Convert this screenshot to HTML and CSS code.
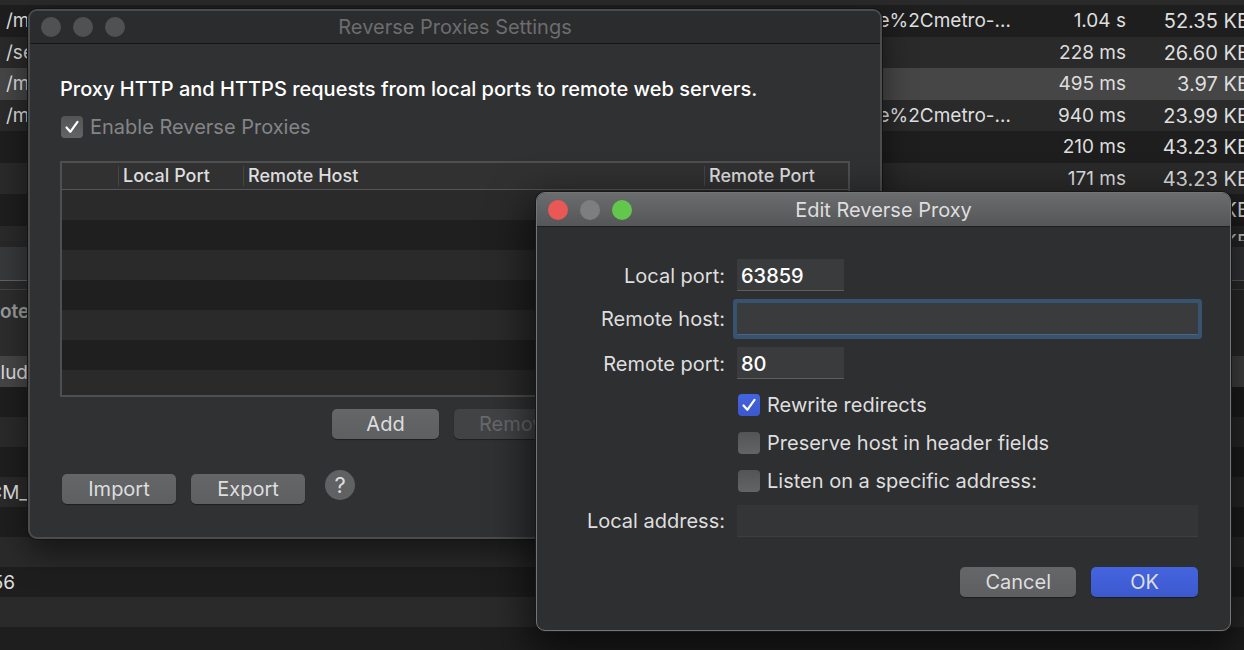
FILE: index.html
```
<!DOCTYPE html>
<html lang="en">
<head>
<meta charset="utf-8">
<title>Edit Reverse Proxy</title>
<link rel="stylesheet" href="styles.css">
</head>
<body>
<main class="backdrop">
  <div class="requests">
    <table class="request-table">
      <colgroup><col class="col-path"><col><col class="col-time"><col class="col-size"></colgroup>
      <tbody>
        <tr><td>/m</td><td class="url">e%2Cmetro-…</td><td class="num">1.04 s</td><td class="num size">52.35 KB</td></tr>
        <tr><td>/se</td><td></td><td class="num">228 ms</td><td class="num size">26.60 KB</td></tr>
        <tr class="selected"><td>/m</td><td></td><td class="num">495 ms</td><td class="num size">3.97 KB</td></tr>
        <tr><td>/m</td><td class="url">e%2Cmetro-…</td><td class="num">940 ms</td><td class="num size">23.99 KB</td></tr>
        <tr><td></td><td></td><td class="num">210 ms</td><td class="num size">43.23 KB</td></tr>
        <tr><td></td><td></td><td class="num">171 ms</td><td class="num size">43.23 KB</td></tr>
        <tr><td></td><td></td><td></td><td class="num size">KB</td></tr>
        <tr><td></td><td></td><td></td><td class="num size">KB</td></tr>
      </tbody>
    </table>
  </div>
  <div class="toolbar"></div>
  <div class="divider"></div>
  <div class="tabs"><span class="tab">ote</span></div>
  <div class="details">
    <div class="detail selected"><span class="tail">clud</span></div>
    <div class="detail"></div>
    <div class="detail"></div>
    <div class="detail"></div>
    <div class="detail"><span class="tail">CM_</span></div>
    <div class="detail"></div>
    <div class="detail"></div>
    <div class="detail"><span class="tail short">56</span></div>
    <div class="detail"></div>
    <div class="detail"></div>
  </div>
</main>

<section class="window settings">
  <header class="titlebar">
    <div class="lights">
      <button class="light" aria-label="Close"></button>
      <button class="light" aria-label="Minimize"></button>
      <button class="light" aria-label="Zoom"></button>
    </div>
    <h1 class="title">Reverse Proxies Settings</h1>
  </header>
  <div class="settings-body">
    <p class="intro">Proxy HTTP and HTTPS requests from local ports to remote web servers.</p>
    <label class="option muted">
      <span class="check"><input type="checkbox" checked>
        <svg viewBox="0 0 22 22"><path d="M5.5 11.5 9.3 15.8 16.5 5.8"/></svg></span>
      Enable Reverse Proxies
    </label>
    <div class="proxy-list">
      <table class="proxy-table">
        <colgroup><col class="col-on"><col class="col-local"><col><col class="col-remote"></colgroup>
        <thead><tr><th></th><th>Local Port</th><th>Remote Host</th><th>Remote Port</th></tr></thead>
      </table>
      <div class="proxy-rows"></div>
    </div>
    <div class="list-actions">
      <button class="btn">Add</button>
      <button class="btn" disabled>Remove</button>
    </div>
    <div class="file-actions">
      <button class="btn">Import</button>
      <button class="btn">Export</button>
      <button class="help" aria-label="Help">?</button>
    </div>
  </div>
</section>

<section class="window editor">
  <header class="titlebar">
    <div class="lights">
      <button class="light red" aria-label="Close"></button>
      <button class="light" aria-label="Minimize"></button>
      <button class="light green" aria-label="Zoom"></button>
    </div>
    <h2 class="title">Edit Reverse Proxy</h2>
  </header>
  <form class="form">
    <label class="name port-name" for="lport">Local port:</label>
    <input class="field port" id="lport" type="text" value="63859">
    <label class="name" for="rhost">Remote host:</label>
    <input class="field current" id="rhost" type="text">
    <label class="name port-name" for="rport">Remote port:</label>
    <input class="field port" id="rport" type="text" value="80">
    <div class="options">
      <label class="option">
        <span class="check"><input type="checkbox" checked>
          <svg viewBox="0 0 22 22"><path d="M5.5 11.5 9.3 15.8 16.5 5.8"/></svg></span>
        Rewrite redirects
      </label>
      <label class="option"><span class="check"><input type="checkbox"></span>Preserve host in header fields</label>
      <label class="option"><span class="check"><input type="checkbox"></span>Listen on a specific address:</label>
    </div>
    <label class="name" for="laddr">Local address:</label>
    <input class="field" id="laddr" type="text" disabled>
    <div class="form-actions">
      <button class="btn" type="button">Cancel</button>
      <button class="btn primary" type="button">OK</button>
    </div>
  </form>
</section>
</body>
</html>
```
FILE: styles.css
```
* { box-sizing: border-box; }

html, body { height: 100%; }

body {
  margin: 0;
  overflow: hidden;
  position: relative;
  background: #1e1e1e;
  color: #dededf;
  font: 20px/24px Inter, "Liberation Sans", sans-serif;
}

button, input { font: inherit; color: inherit; margin: 0; padding: 0; border: 0; }

/* Main window behind the dialogs */
.backdrop { min-height: 100%; overflow: hidden; font-size: 19px; }

.requests {
  height: 241px;
  padding-top: 5px;
  overflow: hidden;
  background: #2a2a2a;
}
.request-table {
  width: calc(100% + 6px);
  height: 252px;
  table-layout: fixed;
  border-collapse: collapse;
}
.request-table tr:nth-child(odd) { background: #1e1e1e; }
.request-table tr:nth-child(even) { background: #2a2a2a; }
.request-table tr.selected { background: #464646; }
.request-table td { padding: 1px 0 0; white-space: nowrap; }
.request-table td:first-child { padding-left: 6px; }
.request-table .url { padding-right: 13px; text-align: right; }
.request-table .num { text-align: right; }
.request-table .size { font-size: 20px; }
.col-path { width: 200px; }
.col-time { width: 102px; }
.col-size { width: 124px; }

.toolbar { height: 40px; border-top: 6px solid #282828; border-bottom: 1px solid #636363; background: #38393b; }
.divider { height: 9px; border-bottom: 1px solid #454545; background: #2d2d2e; }
.tabs { height: 66px; padding-top: 10px; background: #2d2d2e; }
.tab { color: #9b9b9b; font-weight: 600; }
.details { display: grid; }
.detail { height: 30px; background: #1e1e1e; line-height: 32px; overflow: hidden; }
.detail:nth-child(odd) { background: #2a2a2a; }
.detail.selected { height: 31px; background: #464646; line-height: 34px; }
.tail { display: flex; justify-content: flex-end; width: 28px; }
.tail.short { width: 15px; }

/* Dialog windows */
.window {
  position: absolute;
  border: 2px solid #4b4c4d;
  border-radius: 9px;
  background: #303133;
  box-shadow: 0 0 0 1px #141414, 0 14px 32px rgba(0, 0, 0, .5);
  overflow: hidden;
}
.settings { left: 28px; right: 362px; top: 9px; }
.editor {
  left: 536px;
  right: 13px;
  top: 192px;
  border: 1px solid #747576;
  background: #2e2f31;
  box-shadow: 0 0 0 1px #181818, 0 16px 40px 8px rgba(0, 0, 0, .6);
}

.titlebar {
  display: grid;
  grid-template-columns: 1fr auto 1fr;
  align-items: center;
  height: 33px;
  padding: 0 11px;
  border-bottom: 1px solid #151515;
  background: #2b2c2e;
}
.title { margin: 0; font-size: 20px; font-weight: 400; color: #6c6d6f; }
.editor .titlebar { height: 34px; border-color: #1d1d1e; background: linear-gradient(#6b6c6e, #555658); }
.editor .title { color: #dededf; }
.lights { display: flex; gap: 12px; }
.light { width: 20px; height: 20px; border-radius: 50%; background: #505153; }
.editor .light { background: #7c7e80; }
.editor .light.red { background: #e95855; }
.editor .light.green { background: #63c74d; }

.settings-body { padding: 33px 30px; }
.intro { margin: 0 0 14px; color: #fff; font-weight: 500; white-space: nowrap; }

.option { display: flex; align-items: center; gap: 7px; height: 24px; padding-left: 1px; white-space: nowrap; }
.muted { color: #848587; }

.check { display: grid; width: 22px; height: 22px; }
.check input {
  grid-area: 1 / 1;
  width: 22px;
  height: 22px;
  appearance: none;
  border-radius: 4px;
  background: linear-gradient(#535455, #636465);
}
.check svg {
  grid-area: 1 / 1;
  fill: none;
  stroke: #fff;
  stroke-width: 2.2;
  stroke-linecap: round;
  stroke-linejoin: round;
  pointer-events: none;
}
.editor .check input:checked { background: linear-gradient(#4464df, #3c58cc); }

.proxy-list { margin-top: 22px; border: 2px solid #4e4f50; }
.proxy-table { width: 100%; table-layout: fixed; border-collapse: collapse; font-size: 18px; }
.proxy-table th {
  height: 26px;
  padding: 0 0 0 5px;
  border-bottom: 1px solid #545556;
  background: #313132 linear-gradient(#454546, #454546) left center / 1px 20px no-repeat;
  text-align: left;
  font-weight: 500;
  line-height: 24px;
  white-space: nowrap;
}
.proxy-table th:first-child { background: #313132; }
.col-on { width: 56px; }
.col-local { width: 125px; }
.col-remote { width: 144px; }
.proxy-rows { height: 205px; background: repeating-linear-gradient(#2a2a2a 0 30px, #1f1f1f 30px 60px); }

.btn {
  height: 30px;
  min-width: 107px;
  padding: 0 25px;
  border-radius: 5px;
  background: linear-gradient(#656668, #5e5f61);
  box-shadow: 0 1px 1px rgba(0, 0, 0, .4);
}
.btn:disabled { background: #424345; color: #68696b; }
.btn.primary { background: linear-gradient(#4464df, #3d59cf); }
.list-actions { display: flex; gap: 15px; margin: 12px 0 0 272px; }
.file-actions { display: flex; gap: 15px; margin-top: 35px; padding-left: 2px; }
.file-actions .btn { min-width: 114px; }
.help { width: 30px; height: 30px; margin: -4px 0 0 5px; border-radius: 50%; background: #606163; font-size: 22px; }

.form {
  display: grid;
  grid-template-columns: 188px 1fr;
  gap: 12px;
  align-items: center;
  padding: 32px 32px 33px 0;
}
.name { text-align: right; white-space: nowrap; }
.port-name { padding-top: 2px; }
.field {
  width: 100%;
  height: 32px;
  padding: 2px 4px 0;
  border-bottom: 1px solid #5c5d5e;
  background: #3a3b3c;
  color: #fff;
  font-weight: 500;
  outline: none;
}
.port { width: 107px; }
.current { box-shadow: 0 0 0 4px #38536f; border-radius: 1px; border-color: #4b6580; }
.field:disabled { background: #343537; border-color: #3d3e3f; }
.options { grid-column: 2; display: grid; gap: 14px; padding-top: 2px; }
.form-actions { grid-column: 1 / -1; display: flex; justify-content: flex-end; gap: 15px; margin-top: 18px; }
```
